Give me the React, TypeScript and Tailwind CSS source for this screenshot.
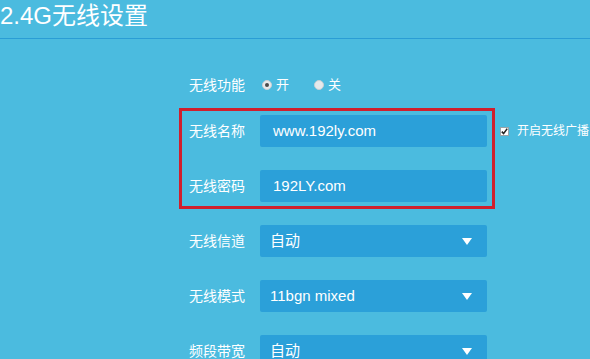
// 2.4G wireless settings panel

const FONT = "font-['Liberation_Sans','Noto_Sans_CJK_SC',sans-serif]";

function Radio({ checked }: { checked?: boolean }) {
  return (
    <span className="flex h-[10px] w-[10px] shrink-0 items-center justify-center rounded-full border border-[#c9d0d4] bg-[#e6e9eb]">
      {checked && <span className="h-[4px] w-[4px] rounded-full bg-[#4a4a4a]" />}
    </span>
  );
}

function Field({ label, value }: { label: string; value: string }) {
  return (
    <div className="flex items-center">
      <span className="w-[71px] shrink-0 text-[14px] leading-none">{label}</span>
      <div className="flex h-[32px] w-[227px] shrink-0 items-center rounded-[2px] bg-[#2ba0d9] pl-[13px] text-[15px]">
        {value}
      </div>
    </div>
  );
}

function Select({ label, value }: { label: string; value: string }) {
  return (
    <div className="flex items-center">
      <span className="w-[71px] shrink-0 text-[14px] leading-none">{label}</span>
      <div className="flex h-[32px] w-[227px] shrink-0 items-center justify-between rounded-[2px] bg-[#2ba0d9] pl-[10px] pr-[15px] text-[15px]">
        <span>{value}</span>
        <svg width="10" height="7" viewBox="0 0 10 7">
          <path d="M0 0h10L5 7z" fill="#ffffff" />
        </svg>
      </div>
    </div>
  );
}

export default function App() {
  return (
    <div className={`h-[359px] w-[590px] overflow-hidden bg-[#4bbbdf] text-white ${FONT}`}>
      <div className="h-[39px] border-b border-[#2a9dd5]">
        <h1 className="text-[24px] leading-[32px]">2.4G无线设置</h1>
      </div>

      <div className="pl-[189px] pt-[36px]">
        <div className="flex h-[20px] items-center">
          <span className="w-[73px] shrink-0 text-[14px] leading-none">无线功能</span>
          <Radio checked />
          <span className="ml-[4px] text-[13px]">开</span>
          <span className="ml-[25px]">
            <Radio />
          </span>
          <span className="ml-[4px] text-[13px]">关</span>
        </div>

        <div className="ml-[-10px] mt-[13px] flex w-[316px] flex-col gap-[23px] border-[3px] border-[#d01f2d] pb-[4px] pl-[7px] pt-[4px]">
          <div className="flex items-center">
            <Field label="无线名称" value="www.192ly.com" />
            <div className="ml-[13px] flex shrink-0 items-center whitespace-nowrap">
              <span className="flex h-[9px] w-[9px] items-center justify-center border border-[#9aa4a8] bg-white">
                <svg width="7" height="7" viewBox="0 0 7 7">
                  <path d="M0.8 3.6l1.8 2 3.6-5" fill="none" stroke="#222" strokeWidth="1.6" />
                </svg>
              </span>
              <span className="ml-[8px] text-[12px]">开启无线广播</span>
            </div>
          </div>
          <Field label="无线密码" value="192LY.com" />
        </div>

        <div className="mt-[16px] flex flex-col gap-[23px]">
          <Select label="无线信道" value="自动" />
          <Select label="无线模式" value="11bgn mixed" />
          <Select label="频段带宽" value="自动" />
        </div>
      </div>
    </div>
  );
}
